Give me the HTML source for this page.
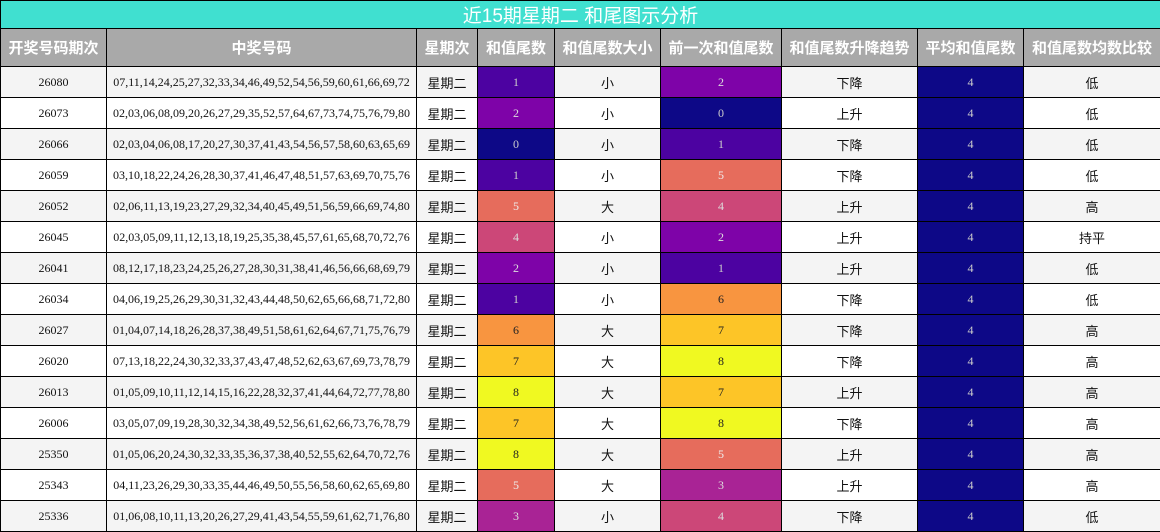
<!DOCTYPE html>
<html><head><meta charset="utf-8"><style>
body{margin:0;background:#fff;}
table{border-collapse:collapse;table-layout:fixed;width:1160px;font-family:"Liberation Serif","Noto Sans CJK SC",serif;font-size:12px;color:#111;}
td,th{border:1px solid #000;text-align:center;padding:0;overflow:hidden;white-space:nowrap;}
.t td{background:#40e0d0;color:#fff;font-family:"Liberation Sans","Noto Sans CJK SC",sans-serif;font-size:19px;height:27px;}
.h th{background:#a9a9a9;color:#fff;font-family:"Liberation Sans","Noto Sans CJK SC",sans-serif;font-size:15px;font-weight:bold;height:37px;}
tbody tr{height:31px;}
tbody tr:nth-child(odd){background:#f4f4f4;}
tbody tr:nth-child(even){background:#fff;}
.c{font-family:"Liberation Sans","Noto Sans CJK SC",sans-serif;font-size:13px;}
.n0{background:#0d0887;color:#ccc}.n1{background:#4c02a1;color:#ccc}.n2{background:#7e03a8;color:#ddd}
.n3{background:#a92395;color:#ddd}.n4{background:#cc4778;color:#ddd}.n5{background:#e66c5c;color:#eee}
.n6{background:#f89540;color:#222}.n7{background:#fdc527;color:#222}.n8{background:#f0f921;color:#222}
</style></head><body>
<table>
<colgroup><col style="width:106px"><col style="width:310px"><col style="width:61px"><col style="width:77px"><col style="width:106px"><col style="width:121px"><col style="width:136px"><col style="width:106px"><col style="width:137px"></colgroup>
<thead>
<tr class="t"><td colspan="9">近15期星期二 和尾图示分析</td></tr>
<tr class="h"><th>开奖号码期次</th><th>中奖号码</th><th>星期次</th><th>和值尾数</th><th>和值尾数大小</th><th>前一次和值尾数</th><th>和值尾数升降趋势</th><th>平均和值尾数</th><th>和值尾数均数比较</th></tr>
</thead>
<tbody>
<tr><td>26080</td><td>07,11,14,24,25,27,32,33,34,46,49,52,54,56,59,60,61,66,69,72</td><td class="c">星期二</td><td class="n1">1</td><td class="c">小</td><td class="n2">2</td><td class="c">下降</td><td class="n0">4</td><td class="c">低</td></tr>
<tr><td>26073</td><td>02,03,06,08,09,20,26,27,29,35,52,57,64,67,73,74,75,76,79,80</td><td class="c">星期二</td><td class="n2">2</td><td class="c">小</td><td class="n0">0</td><td class="c">上升</td><td class="n0">4</td><td class="c">低</td></tr>
<tr><td>26066</td><td>02,03,04,06,08,17,20,27,30,37,41,43,54,56,57,58,60,63,65,69</td><td class="c">星期二</td><td class="n0">0</td><td class="c">小</td><td class="n1">1</td><td class="c">下降</td><td class="n0">4</td><td class="c">低</td></tr>
<tr><td>26059</td><td>03,10,18,22,24,26,28,30,37,41,46,47,48,51,57,63,69,70,75,76</td><td class="c">星期二</td><td class="n1">1</td><td class="c">小</td><td class="n5">5</td><td class="c">下降</td><td class="n0">4</td><td class="c">低</td></tr>
<tr><td>26052</td><td>02,06,11,13,19,23,27,29,32,34,40,45,49,51,56,59,66,69,74,80</td><td class="c">星期二</td><td class="n5">5</td><td class="c">大</td><td class="n4">4</td><td class="c">上升</td><td class="n0">4</td><td class="c">高</td></tr>
<tr><td>26045</td><td>02,03,05,09,11,12,13,18,19,25,35,38,45,57,61,65,68,70,72,76</td><td class="c">星期二</td><td class="n4">4</td><td class="c">小</td><td class="n2">2</td><td class="c">上升</td><td class="n0">4</td><td class="c">持平</td></tr>
<tr><td>26041</td><td>08,12,17,18,23,24,25,26,27,28,30,31,38,41,46,56,66,68,69,79</td><td class="c">星期二</td><td class="n2">2</td><td class="c">小</td><td class="n1">1</td><td class="c">上升</td><td class="n0">4</td><td class="c">低</td></tr>
<tr><td>26034</td><td>04,06,19,25,26,29,30,31,32,43,44,48,50,62,65,66,68,71,72,80</td><td class="c">星期二</td><td class="n1">1</td><td class="c">小</td><td class="n6">6</td><td class="c">下降</td><td class="n0">4</td><td class="c">低</td></tr>
<tr><td>26027</td><td>01,04,07,14,18,26,28,37,38,49,51,58,61,62,64,67,71,75,76,79</td><td class="c">星期二</td><td class="n6">6</td><td class="c">大</td><td class="n7">7</td><td class="c">下降</td><td class="n0">4</td><td class="c">高</td></tr>
<tr><td>26020</td><td>07,13,18,22,24,30,32,33,37,43,47,48,52,62,63,67,69,73,78,79</td><td class="c">星期二</td><td class="n7">7</td><td class="c">大</td><td class="n8">8</td><td class="c">下降</td><td class="n0">4</td><td class="c">高</td></tr>
<tr><td>26013</td><td>01,05,09,10,11,12,14,15,16,22,28,32,37,41,44,64,72,77,78,80</td><td class="c">星期二</td><td class="n8">8</td><td class="c">大</td><td class="n7">7</td><td class="c">上升</td><td class="n0">4</td><td class="c">高</td></tr>
<tr><td>26006</td><td>03,05,07,09,19,28,30,32,34,38,49,52,56,61,62,66,73,76,78,79</td><td class="c">星期二</td><td class="n7">7</td><td class="c">大</td><td class="n8">8</td><td class="c">下降</td><td class="n0">4</td><td class="c">高</td></tr>
<tr><td>25350</td><td>01,05,06,20,24,30,32,33,35,36,37,38,40,52,55,62,64,70,72,76</td><td class="c">星期二</td><td class="n8">8</td><td class="c">大</td><td class="n5">5</td><td class="c">上升</td><td class="n0">4</td><td class="c">高</td></tr>
<tr><td>25343</td><td>04,11,23,26,29,30,33,35,44,46,49,50,55,56,58,60,62,65,69,80</td><td class="c">星期二</td><td class="n5">5</td><td class="c">大</td><td class="n3">3</td><td class="c">上升</td><td class="n0">4</td><td class="c">高</td></tr>
<tr><td>25336</td><td>01,06,08,10,11,13,20,26,27,29,41,43,54,55,59,61,62,71,76,80</td><td class="c">星期二</td><td class="n3">3</td><td class="c">小</td><td class="n4">4</td><td class="c">下降</td><td class="n0">4</td><td class="c">低</td></tr>
</tbody></table>
</body></html>
